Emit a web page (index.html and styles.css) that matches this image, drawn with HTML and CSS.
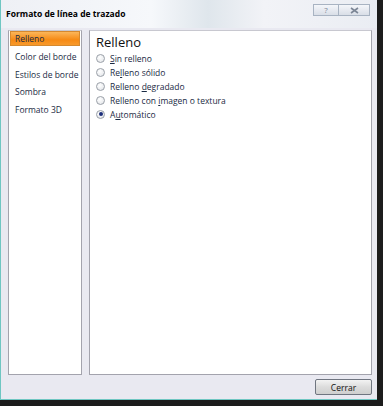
FILE: index.html
```html
<!DOCTYPE html>
<html lang="es">
<head>
    <meta charset="UTF-8">
    <title>Formato de línea de trazado</title>
    <link rel="stylesheet" href="styles.css">
</head>
<body>
    <div class="frame">
        <div class="dialog">
            <div class="titlebar">
                <span class="title">Formato de línea de trazado</span>
                <div class="caption-buttons">
                    <span class="cap-btn">?</span>
                    <span class="cap-btn close">
                        <svg width="9" height="7" viewBox="0 0 9 7"><path d="M1 1 L8 6 M8 1 L1 6" stroke="#7c8696" stroke-width="1.6"/></svg>
                    </span>
                </div>
            </div>
            <div class="body">
                <ul class="nav">
                    <li class="nav-item active">Relleno</li>
                    <li class="nav-item">Color del borde</li>
                    <li class="nav-item">Estilos de borde</li>
                    <li class="nav-item">Sombra</li>
                    <li class="nav-item">Formato 3D</li>
                </ul>
                <div class="panel">
                    <h2 class="panel-title">Relleno</h2>
                    <label class="option"><span class="radio"></span><span><u>S</u>in relleno</span></label>
                    <label class="option"><span class="radio"></span><span>Re<u>l</u>leno sólido</span></label>
                    <label class="option"><span class="radio"></span><span>Relleno <u>d</u>egradado</span></label>
                    <label class="option"><span class="radio"></span><span>Relleno con <u>i</u>magen o textura</span></label>
                    <label class="option"><span class="radio checked"></span><span>A<u>u</u>tomático</span></label>
                </div>
            </div>
            <div class="footer">
                <button class="btn">Cerrar</button>
            </div>
        </div>
    </div>
</body>
</html>
```

FILE: styles.css
```css
html, body {
    margin: 0;
    padding: 0;
    width: 383px;
    height: 406px;
    background: #1c1c1c;
    overflow: hidden;
}

.frame {
    width: 377px;
    height: 400px;
    background: #6fc6c2;
    padding: 0 0 1px 1px;
    box-sizing: border-box;
}

.dialog {
    height: 100%;
    background: #e9e9f1;
    display: flex;
    flex-direction: column;
    font-family: "Open Sans", "Liberation Sans", sans-serif;
    font-size: 8.5px;
    color: #1a2a44;
}

.titlebar {
    height: 28px;
    display: flex;
    align-items: flex-start;
    justify-content: space-between;
    background: linear-gradient(90deg, #eef0f5 0%, #f6f8fb 40%, #dfe6ec 55%, #f2f3f7 70%, #eaedf3 100%);
}

.title {
    font-weight: bold;
    color: #000;
    font-size: 8.5px;
    padding: 8px 0 0 5px;
}

.caption-buttons {
    display: flex;
    margin: 4px 7px 0 0;
}

.cap-btn {
    width: 24px;
    height: 10px;
    border: 1px solid #a8b3c2;
    background: linear-gradient(#f4f6fa, #d9dee7);
    color: #7c8696;
    font-size: 8px;
    line-height: 10px;
    text-align: center;
    display: flex;
    align-items: center;
    justify-content: center;
}

.cap-btn.close {
    width: 30px;
    border-left: none;
}

.body {
    flex: 1;
    display: flex;
    gap: 7px;
    padding: 2px 5px 0 7px;
}

.nav {
    list-style: none;
    margin: 0;
    padding: 0 1px;
    width: 70px;
    background: #fff;
    border: 1px solid #a3a3ad;
    border-top-color: #c8c8d0;
}

.nav-item {
    height: 15px;
    line-height: 15px;
    padding-left: 5px;
    margin-bottom: 2.75px;
    white-space: nowrap;
}

.nav-item.active {
    background: linear-gradient(#fbb65a, #f68a14 60%, #f89a2c);
    border: 1px solid #d6892e;
    height: 13px;
    line-height: 13px;
    padding-left: 4px;
}

.panel {
    flex: 1;
    background: #fff;
    border: 1px solid #a3a3ad;
    border-top-color: #c8c8d0;
    padding: 3px 6px;
}

.panel-title {
    margin: 0 0 1px;
    font-size: 13px;
    line-height: 16px;
    font-weight: normal;
    color: #111;
}

.option {
    display: flex;
    align-items: center;
    gap: 5px;
    height: 14px;
}

.radio {
    width: 7px;
    height: 7px;
    border-radius: 50%;
    border: 1px solid #9aa0a8;
    background: radial-gradient(circle at 40% 35%, #fff, #dfe2e6);
    display: flex;
    align-items: center;
    justify-content: center;
}

.radio.checked::after {
    content: "";
    width: 4px;
    height: 4px;
    border-radius: 50%;
    background: #1c2e7a;
}

.footer {
    height: 24px;
    display: flex;
    justify-content: flex-end;
    align-items: center;
    padding-right: 5px;
}

.btn {
    width: 57px;
    height: 16px;
    border: 1px solid #6f7580;
    border-radius: 2px;
    background: linear-gradient(#f3f3f3, #dcdcdc 50%, #cfcfcf);
    font-family: "Open Sans", "Liberation Sans", sans-serif;
    font-size: 8.5px;
    color: #111;
    padding: 0;
}
```
